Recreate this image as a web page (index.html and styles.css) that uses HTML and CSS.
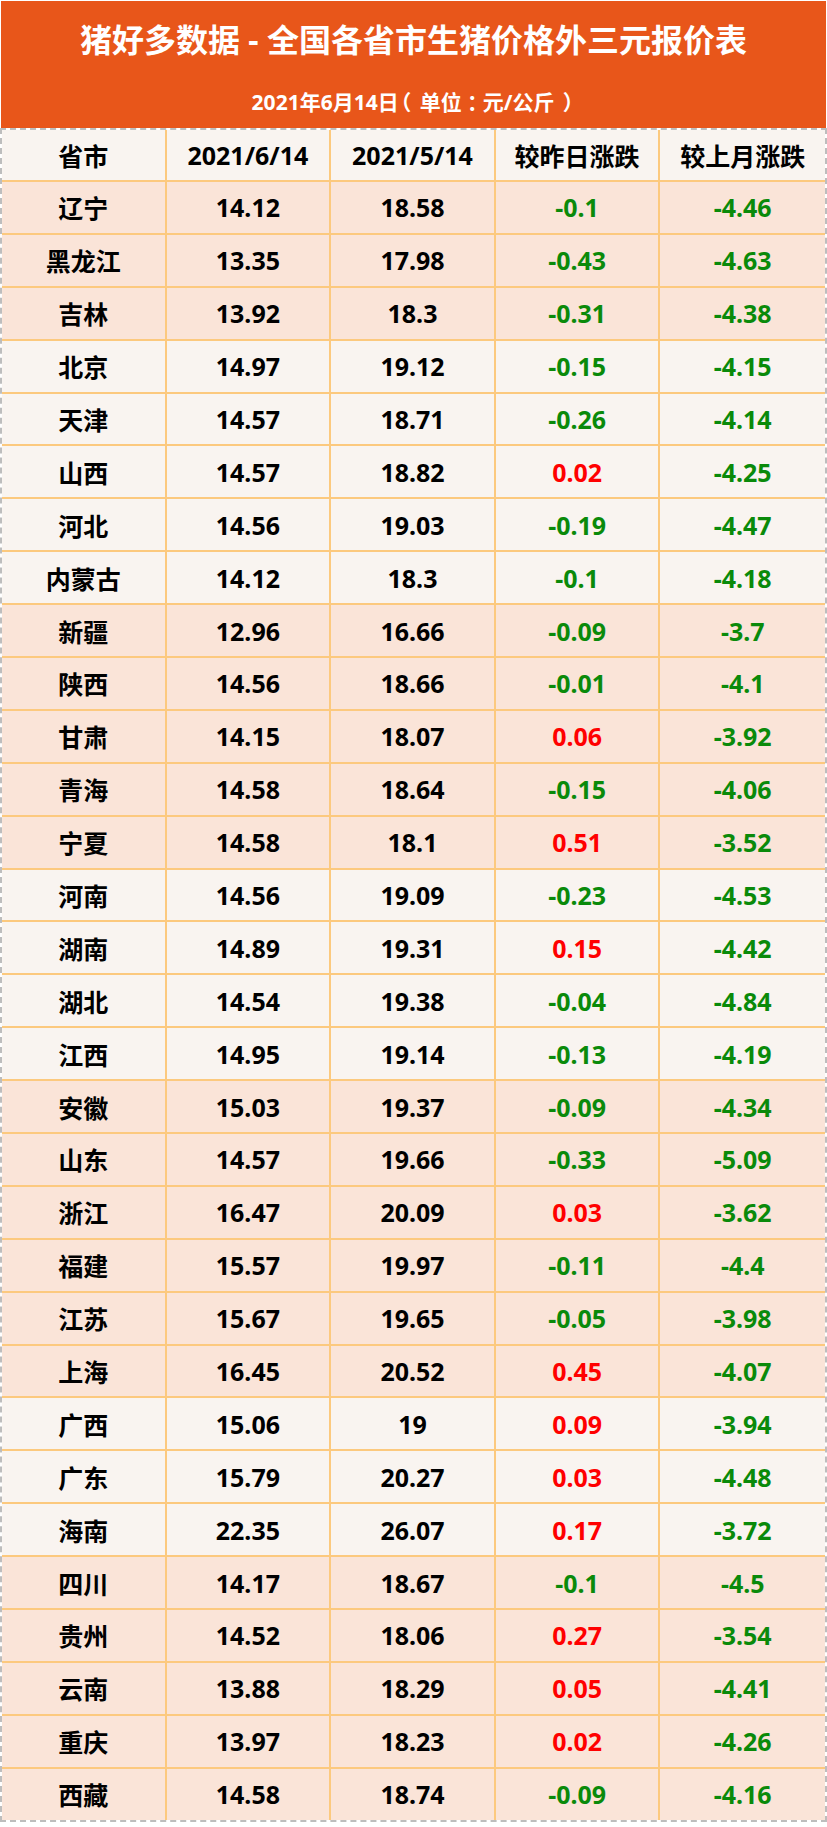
FILE: index.html
```html
<!DOCTYPE html>
<html lang="zh-CN">
<head>
<meta charset="utf-8">
<title>猪好多数据 - 全国各省市生猪价格外三元报价表</title>
<link rel="stylesheet" href="styles.css">
</head>
<body>
<div class="page">
  <div class="banner">
    <div class="title">猪好多数据 - 全国各省市生猪价格外三元报价表</div>
    <div class="subtitle">2021年6月14日<span class="lp">（</span>单位<span class="colon">：</span>元/公斤<span class="rp">）</span></div>
  </div>
  <div class="table">
    <div class="row head light"><div class="cell">省市</div><div class="cell">2021/6/14</div><div class="cell">2021/5/14</div><div class="cell">较昨日涨跌</div><div class="cell">较上月涨跌</div></div>
    <div class="row peach"><div class="cell">辽宁</div><div class="cell">14.12</div><div class="cell">18.58</div><div class="cell down">-0.1</div><div class="cell down">-4.46</div></div>
    <div class="row peach"><div class="cell">黑龙江</div><div class="cell">13.35</div><div class="cell">17.98</div><div class="cell down">-0.43</div><div class="cell down">-4.63</div></div>
    <div class="row peach"><div class="cell">吉林</div><div class="cell">13.92</div><div class="cell">18.3</div><div class="cell down">-0.31</div><div class="cell down">-4.38</div></div>
    <div class="row light"><div class="cell">北京</div><div class="cell">14.97</div><div class="cell">19.12</div><div class="cell down">-0.15</div><div class="cell down">-4.15</div></div>
    <div class="row light"><div class="cell">天津</div><div class="cell">14.57</div><div class="cell">18.71</div><div class="cell down">-0.26</div><div class="cell down">-4.14</div></div>
    <div class="row light"><div class="cell">山西</div><div class="cell">14.57</div><div class="cell">18.82</div><div class="cell up">0.02</div><div class="cell down">-4.25</div></div>
    <div class="row light"><div class="cell">河北</div><div class="cell">14.56</div><div class="cell">19.03</div><div class="cell down">-0.19</div><div class="cell down">-4.47</div></div>
    <div class="row light"><div class="cell">内蒙古</div><div class="cell">14.12</div><div class="cell">18.3</div><div class="cell down">-0.1</div><div class="cell down">-4.18</div></div>
    <div class="row peach"><div class="cell">新疆</div><div class="cell">12.96</div><div class="cell">16.66</div><div class="cell down">-0.09</div><div class="cell down">-3.7</div></div>
    <div class="row peach"><div class="cell">陕西</div><div class="cell">14.56</div><div class="cell">18.66</div><div class="cell down">-0.01</div><div class="cell down">-4.1</div></div>
    <div class="row peach"><div class="cell">甘肃</div><div class="cell">14.15</div><div class="cell">18.07</div><div class="cell up">0.06</div><div class="cell down">-3.92</div></div>
    <div class="row peach"><div class="cell">青海</div><div class="cell">14.58</div><div class="cell">18.64</div><div class="cell down">-0.15</div><div class="cell down">-4.06</div></div>
    <div class="row peach"><div class="cell">宁夏</div><div class="cell">14.58</div><div class="cell">18.1</div><div class="cell up">0.51</div><div class="cell down">-3.52</div></div>
    <div class="row light"><div class="cell">河南</div><div class="cell">14.56</div><div class="cell">19.09</div><div class="cell down">-0.23</div><div class="cell down">-4.53</div></div>
    <div class="row light"><div class="cell">湖南</div><div class="cell">14.89</div><div class="cell">19.31</div><div class="cell up">0.15</div><div class="cell down">-4.42</div></div>
    <div class="row light"><div class="cell">湖北</div><div class="cell">14.54</div><div class="cell">19.38</div><div class="cell down">-0.04</div><div class="cell down">-4.84</div></div>
    <div class="row light"><div class="cell">江西</div><div class="cell">14.95</div><div class="cell">19.14</div><div class="cell down">-0.13</div><div class="cell down">-4.19</div></div>
    <div class="row peach"><div class="cell">安徽</div><div class="cell">15.03</div><div class="cell">19.37</div><div class="cell down">-0.09</div><div class="cell down">-4.34</div></div>
    <div class="row peach"><div class="cell">山东</div><div class="cell">14.57</div><div class="cell">19.66</div><div class="cell down">-0.33</div><div class="cell down">-5.09</div></div>
    <div class="row peach"><div class="cell">浙江</div><div class="cell">16.47</div><div class="cell">20.09</div><div class="cell up">0.03</div><div class="cell down">-3.62</div></div>
    <div class="row peach"><div class="cell">福建</div><div class="cell">15.57</div><div class="cell">19.97</div><div class="cell down">-0.11</div><div class="cell down">-4.4</div></div>
    <div class="row peach"><div class="cell">江苏</div><div class="cell">15.67</div><div class="cell">19.65</div><div class="cell down">-0.05</div><div class="cell down">-3.98</div></div>
    <div class="row peach"><div class="cell">上海</div><div class="cell">16.45</div><div class="cell">20.52</div><div class="cell up">0.45</div><div class="cell down">-4.07</div></div>
    <div class="row light"><div class="cell">广西</div><div class="cell">15.06</div><div class="cell">19</div><div class="cell up">0.09</div><div class="cell down">-3.94</div></div>
    <div class="row light"><div class="cell">广东</div><div class="cell">15.79</div><div class="cell">20.27</div><div class="cell up">0.03</div><div class="cell down">-4.48</div></div>
    <div class="row light"><div class="cell">海南</div><div class="cell">22.35</div><div class="cell">26.07</div><div class="cell up">0.17</div><div class="cell down">-3.72</div></div>
    <div class="row peach"><div class="cell">四川</div><div class="cell">14.17</div><div class="cell">18.67</div><div class="cell down">-0.1</div><div class="cell down">-4.5</div></div>
    <div class="row peach"><div class="cell">贵州</div><div class="cell">14.52</div><div class="cell">18.06</div><div class="cell up">0.27</div><div class="cell down">-3.54</div></div>
    <div class="row peach"><div class="cell">云南</div><div class="cell">13.88</div><div class="cell">18.29</div><div class="cell up">0.05</div><div class="cell down">-4.41</div></div>
    <div class="row peach"><div class="cell">重庆</div><div class="cell">13.97</div><div class="cell">18.23</div><div class="cell up">0.02</div><div class="cell down">-4.26</div></div>
    <div class="row peach last"><div class="cell">西藏</div><div class="cell">14.58</div><div class="cell">18.74</div><div class="cell down">-0.09</div><div class="cell down">-4.16</div></div>
  </div>
</div>
</body>
</html>
```
FILE: styles.css
```css
* { box-sizing: border-box; }
html, body { margin: 0; padding: 0; background: #ffffff; }
body {
  font-family: "Noto Sans", "Noto Sans CJK SC", sans-serif;
  font-weight: 700;
  color: #000;
}
.page { width: 827px; }
.banner {
  margin: 1px 1px 0 1px;
  height: 127px;
  background: #e8561a;
  color: #ffffff;
  display: flex;
  flex-direction: column;
  align-items: center;
}
.title {
  margin-top: 19px;
  font-size: 32px;
  line-height: 40px;
  white-space: nowrap;
}
.subtitle {
  margin-top: 27px;
  font-size: 21px;
  line-height: 30px;
  white-space: nowrap;
}
.lp, .colon, .rp { font-feature-settings: "halt"; }
.lp { padding: 0 0.4em 0 0.1em; }
.colon { padding: 0 0.25em; }
.rp { padding: 0 0.1em 0 0.4em; }
.table {
  width: 827px;
  border: 2px dashed #bdbdbd;
}
.row {
  display: grid;
  grid-template-columns: repeat(5, 1fr);
  height: 52.9px;
  border-bottom: 2px solid #fcc97e;
}
.row.head { height: 52px; }
.row.last { border-bottom: none; height: 51px; }
.row.light { background: #f9f4f0; }
.row.peach { background: #fae4d8; }
.cell {
  display: flex;
  align-items: center;
  justify-content: center;
  font-size: 25px;
  border-right: 2px solid #fcc97e;
}
.cell:last-child { border-right: none; }
.up { color: #ff0000; }
.down { color: #0a8a0a; }
```
